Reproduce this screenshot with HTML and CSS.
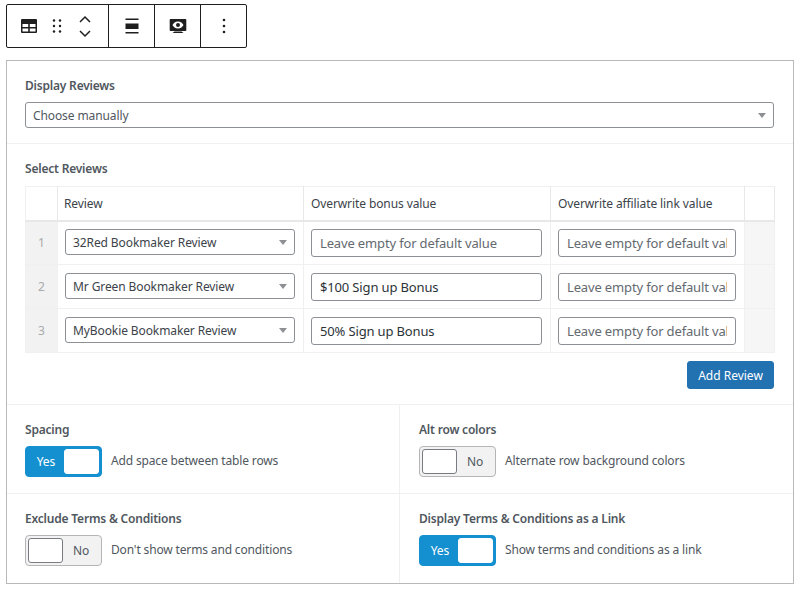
FILE: index.html
```html
<!doctype html>
<html lang="en">
<head>
  <meta charset="UTF-8">
  <meta name="viewport" content="width=device-width, initial-scale=1.0">
  <title>Review Table Block</title>
  <link rel="stylesheet" href="styles.css">
</head>
<body>
  <div class="toolbar">
    <div class="tool-group tool-main">
      <svg class="icon" viewBox="0 0 24 24" width="24" height="24"><path fill-rule="evenodd" d="M5 5h14a1 1 0 0 1 1 1v12a1 1 0 0 1-1 1H5a1 1 0 0 1-1-1V6a1 1 0 0 1 1-1zm.500 5v3h5.700v-3zm7.300 0v3h5.700v-3zm-7.300 4.500v3h5.700v-3zm7.300 0v3h5.700v-3z"/></svg>
      <svg class="icon drag" viewBox="0 0 18 24" width="18" height="24"><circle cx="6" cy="6.500" r="1.200"/><circle cx="12" cy="6.500" r="1.200"/><circle cx="6" cy="12" r="1.200"/><circle cx="12" cy="12" r="1.200"/><circle cx="6" cy="17.500" r="1.200"/><circle cx="12" cy="17.500" r="1.200"/></svg>
      <div class="movers">
        <svg viewBox="0 0 14 8" width="14" height="8"><path d="M2 7l5-5 5 5" fill="none" stroke="#1e1e1e" stroke-width="1.500"/></svg>
        <svg viewBox="0 0 14 8" width="14" height="8"><path d="M2 1l5 5 5-5" fill="none" stroke="#1e1e1e" stroke-width="1.500"/></svg>
      </div>
    </div>
    <div class="tool-group tool-small">
      <svg class="icon" viewBox="0 0 24 24" width="24" height="24"><path d="M5.500 4.500h13V6h-13zM5.500 9.500h13v5.500h-13zM5.500 18h13v1.500h-13z"/></svg>
    </div>
    <div class="tool-group tool-small">
      <svg class="icon" viewBox="0 0 24 24" width="24" height="24"><path fill-rule="evenodd" d="M4.500 5h15a.8.8 0 0 1 .8.8v10.400a.8.8 0 0 1-.8.8h-15a.8.8 0 0 1-.8-.8V5.800a.8.8 0 0 1 .8-.8zM12 7.500c-2.700 0-4.600 1.700-5.500 3.500.9 1.800 2.800 3.500 5.500 3.500s4.600-1.700 5.500-3.500c-.9-1.800-2.800-3.500-5.500-3.500zm0 1.500a2 2 0 1 1 0 4 2 2 0 0 1 0-4zM8.500 17.500h7l2 1.500h-11z"/></svg>
    </div>
    <div class="tool-group tool-small">
      <svg class="icon" viewBox="0 0 24 24" width="24" height="24"><circle cx="12" cy="6" r="1.300"/><circle cx="12" cy="12" r="1.300"/><circle cx="12" cy="18" r="1.300"/></svg>
    </div>
  </div>

  <div class="panel">
    <section class="section section-display">
      <div class="label">Display Reviews</div>
      <div class="select select-wide">Choose manually</div>
    </section>

    <section class="section section-reviews">
      <div class="label">Select Reviews</div>
      <table class="reviews">
        <thead>
          <tr>
            <th class="col-num"></th>
            <th class="col-review">Review</th>
            <th class="col-bonus">Overwrite bonus value</th>
            <th class="col-link">Overwrite affiliate link value</th>
            <th class="col-end"></th>
          </tr>
        </thead>
        <tbody>
          <tr>
            <td class="num">1</td>
            <td><div class="select">32Red Bookmaker Review</div></td>
            <td><input class="input" placeholder="Leave empty for default value"></td>
            <td><input class="input" placeholder="Leave empty for default value"></td>
            <td class="end"></td>
          </tr>
          <tr>
            <td class="num">2</td>
            <td><div class="select">Mr Green Bookmaker Review</div></td>
            <td><input class="input" value="$100 Sign up Bonus"></td>
            <td><input class="input" placeholder="Leave empty for default value"></td>
            <td class="end"></td>
          </tr>
          <tr>
            <td class="num">3</td>
            <td><div class="select">MyBookie Bookmaker Review</div></td>
            <td><input class="input" value="50% Sign up Bonus"></td>
            <td><input class="input" placeholder="Leave empty for default value"></td>
            <td class="end"></td>
          </tr>
        </tbody>
      </table>
      <div class="actions"><button class="button">Add Review</button></div>
    </section>

    <section class="options">
      <div class="option">
        <div class="label">Spacing</div>
        <div class="option-row">
          <div class="toggle on"><span class="toggle-text">Yes</span><span class="knob"></span></div>
          <span class="hint">Add space between table rows</span>
        </div>
      </div>
      <div class="option">
        <div class="label">Alt row colors</div>
        <div class="option-row">
          <div class="toggle"><span class="knob"></span><span class="toggle-text">No</span></div>
          <span class="hint">Alternate row background colors</span>
        </div>
      </div>
      <div class="option">
        <div class="label">Exclude Terms &amp; Conditions</div>
        <div class="option-row">
          <div class="toggle"><span class="knob"></span><span class="toggle-text">No</span></div>
          <span class="hint">Don't show terms and conditions</span>
        </div>
      </div>
      <div class="option">
        <div class="label">Display Terms &amp; Conditions as a Link</div>
        <div class="option-row">
          <div class="toggle on"><span class="toggle-text">Yes</span><span class="knob"></span></div>
          <span class="hint">Show terms and conditions as a link</span>
        </div>
      </div>
    </section>
  </div>
</body>
</html>
```

FILE: styles.css
```css
* {
    box-sizing: border-box;
}
body {
    margin: 0;
    padding: 4px 6px 0;
    width: 800px;
    height: 590px;
    overflow: hidden;
    background: #fff;
    font-family: "Noto Sans", Roboto, sans-serif;
    font-size: 12px;
    letter-spacing: -0.1px;
    color: #50575e;
}
.toolbar {
    display: flex;
    width: 241px;
    height: 44px;
    border: 1px solid #1e1e1e;
    border-radius: 2px;
}
.tool-group {
    display: flex;
    align-items: center;
    justify-content: center;
    border-right: 1px solid #1e1e1e;
}
.tool-group:last-child {
    border-right: none;
}
.tool-main {
    width: 102px;
    padding-left: 10px;
    justify-content: flex-start;
}
.tool-small {
    width: 46px;
}
.tool-small:last-child {
    width: 45px;
}
.icon {
    display: block;
    fill: #1e1e1e;
    flex: none;
}
.drag {
    margin: 0 12px 0 7px;
}
.movers {
    display: flex;
    flex-direction: column;
    gap: 7px;
    width: 14px;
    margin-top: 1px;
}
.movers svg {
    display: block;
}
.panel {
    width: 788px;
    height: 524px;
    margin-top: 12px;
    border: 1px solid #b9b9b9;
}
.section {
    padding: 0 18px;
    border-bottom: 1px solid #f0f0f0;
}
.section-display {
    height: 83px;
    padding-top: 17px;
}
.section-display .label {
    margin-bottom: 8px;
}
.section-reviews {
    height: 261px;
    padding-top: 17px;
}
.label {
    font-size: 12px;
    font-weight: 600;
    line-height: 16px;
    letter-spacing: -0.2px;
    color: #50575e;
    margin-bottom: 9px;
}
.select {
    position: relative;
    height: 26px;
    line-height: 26px;
    padding-left: 7px;
    border: 1px solid #8c8f94;
    border-radius: 3px;
    font-size: 12px;
    color: #3c434a;
    background: #fff;
}
.select::after {
    content: "";
    position: absolute;
    right: 7px;
    top: 10px;
    border-left: 4px solid transparent;
    border-right: 4px solid transparent;
    border-top: 5px solid #8c8f94;
}
.select-wide {
    width: 749px;
    color: #50575e;
}
.reviews {
    width: 750px;
    border-collapse: collapse;
    table-layout: fixed;
    border: 1px solid #dcdcde;
}
.reviews th, .reviews td {
    border: 1px solid #f0f0f0;
    padding: 0;
}
.reviews th {
    height: 34px;
    padding: 1px 0 0 7px;
    text-align: left;
    font-weight: 400;
    font-size: 12px;
    color: #3c434a;
    border-bottom: 2px solid #e8e8e8;
    border-right-color: #e8e8e8;
}
.reviews td {
    height: 44px;
    padding: 0 8px 0 7px;
}
.reviews td .select {
    margin-bottom: 2px;
}
.col-num {
    width: 32px;
}
.reviews th.col-review {
    width: 246px;
    padding-left: 6px;
}
.col-bonus {
    width: 247px;
}
.col-link {
    width: 194px;
}
.reviews td.num {
    padding: 0;
    text-align: center;
    background: #f2f2f2;
    color: #a7aaad;
}
.reviews td.end {
    background: #f6f6f6;
    padding: 0;
}
.input {
    display: block;
    width: 100%;
    height: 28px;
    padding: 0 8px;
    border: 1px solid #8c8f94;
    border-radius: 3px;
    font-family: inherit;
    font-size: 13px;
    letter-spacing: -0.15px;
    color: #2c3338;
    background: #fff;
}
.input::placeholder {
    color: #646970;
    opacity: 1;
}
.actions {
    display: flex;
    justify-content: flex-end;
    padding: 8px 1px 0 0;
}
.button {
    width: 87px;
    height: 28px;
    padding: 0;
    border: 1px solid #2271b1;
    border-radius: 3px;
    background: #2271b1;
    color: #fff;
    font-family: inherit;
    font-size: 12px;
}
.options {
    display: grid;
    grid-template-columns: 393px 393px;
    grid-template-rows: 89px 89px;
}
.option {
    padding: 17px 18px 0;
    border-bottom: 1px solid #f0f0f0;
}
.option:nth-child(odd) {
    border-right: 1px solid #f0f0f0;
}
.option:nth-child(even) {
    padding-left: 19px;
}
.option:nth-child(n+3) {
    border-bottom: none;
}
.option .label {
    margin-bottom: 8px;
}
.option-row {
    display: flex;
    align-items: center;
    gap: 9px;
}
.hint {
    font-size: 12px;
    line-height: 26px;
    margin-top: -2px;
    letter-spacing: -0.15px;
    color: #50575e;
}
.toggle {
    display: flex;
    align-items: center;
    width: 77px;
    height: 31px;
    padding: 2px;
    border: 1px solid #b5b5b5;
    border-radius: 4px;
    background: #f2f2f2;
}
.toggle.on {
    border-color: #1490d0;
    background: #1490d0;
}
.knob {
    width: 35px;
    height: 25px;
    background: #fff;
    border: 1px solid #787c82;
    border-radius: 3px;
}
.toggle.on .knob {
    border-color: #fff;
}
.toggle-text {
    flex: 1;
    text-align: center;
    font-size: 12px;
    color: #50575e;
}
.toggle.on .toggle-text {
    color: #fff;
}
```
